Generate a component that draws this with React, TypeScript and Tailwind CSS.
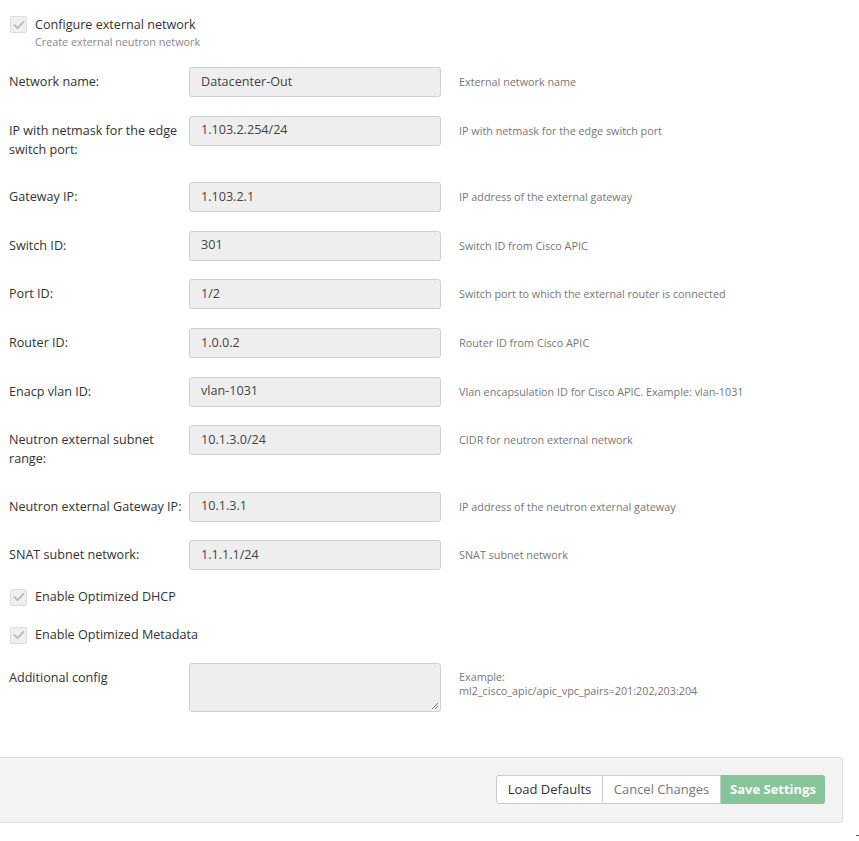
import React from "react"

const FONT = { fontFamily: '"Open Sans", "Liberation Sans", sans-serif' }

const rows: { label: string; value: string; help: string }[] = [
  { label: "Network name:", value: "Datacenter-Out", help: "External network name" },
  { label: "IP with netmask for the edge switch port:", value: "1.103.2.254/24", help: "IP with netmask for the edge switch port" },
  { label: "Gateway IP:", value: "1.103.2.1", help: "IP address of the external gateway" },
  { label: "Switch ID:", value: "301", help: "Switch ID from Cisco APIC" },
  { label: "Port ID:", value: "1/2", help: "Switch port to which the external router is connected" },
  { label: "Router ID:", value: "1.0.0.2", help: "Router ID from Cisco APIC" },
  { label: "Enacp vlan ID:", value: "vlan-1031", help: "Vlan encapsulation ID for Cisco APIC. Example: vlan-1031" },
  { label: "Neutron external subnet range:", value: "10.1.3.0/24", help: "CIDR for neutron external network" },
  { label: "Neutron external Gateway IP:", value: "10.1.3.1", help: "IP address of the neutron external gateway" },
  { label: "SNAT subnet network:", value: "1.1.1.1/24", help: "SNAT subnet network" },
]

function Check() {
  return (
    <span className="w-[17px] h-[17px] shrink-0 rounded-[2px] border border-[#dcdcdc] bg-[#efefef] flex items-center justify-center">
      <svg className="w-[12px] h-[12px]" viewBox="0 0 12 12" fill="none">
        <path d="M1.5 6.2l3 3 6-6.4" stroke="#b9b9b9" strokeWidth={1.8} strokeLinecap="round" strokeLinejoin="round" />
      </svg>
    </span>
  )
}

export default function App() {
  return (
    <div className="relative w-[859px] h-[841px] bg-white text-[#333] overflow-hidden" style={FONT}>
      <div className="pl-[10px] pt-[16px]">
        {/* Main checkbox */}
        <div className="flex items-center gap-2 h-[17px]">
          <Check />
          <span className="text-[12.6px] text-[#333] pt-[1px]">Configure external network</span>
        </div>
        <div className="pl-[25px] mt-[1px] text-[10.8px] text-[#888] leading-[16px]">Create external neutron network</div>
      </div>

      {/* Fields */}
      <div className="pl-[9px] mt-[17px]">
        {rows.map((r) => (
          <div key={r.label} className="flex items-start mb-[18.6px]">
            <label className="w-[180px] pt-[5px] pb-[5px] text-[12.6px] leading-[19px] text-[#333]">{r.label}</label>
            <div className="w-[252px] h-[30px] rounded-[3px] border border-[#cfcfcf] bg-[#eeeeee] px-[11px] flex items-center text-[12.6px] text-[#444]">
              {r.value}
            </div>
            <div className="ml-[18px] pt-[7px] text-[10.8px] leading-[16px] text-[#777]">{r.help}</div>
          </div>
        ))}
      </div>

      {/* Optimizations */}
      <div className="pl-[10px] mt-[3px]">
        <div className="flex items-center gap-2 h-[17px]">
          <Check />
          <span className="text-[12.6px]">Enable Optimized DHCP</span>
        </div>
        <div className="flex items-center gap-2 h-[17px] mt-[21px]">
          <Check />
          <span className="text-[12.6px]">Enable Optimized Metadata</span>
        </div>
      </div>

      <div className="pl-[9px] mt-[19px] flex items-start">
        <label className="w-[180px] pt-[5px] text-[12.6px] leading-[19px]">Additional config</label>
        <div className="relative w-[252px] h-[49px] rounded-[3px] border border-[#cfcfcf] bg-[#eeeeee]">
          <svg className="absolute right-[1px] bottom-[1px] w-[8px] h-[8px]" viewBox="0 0 8 8">
            <path d="M7 1L1 7M7 4L4 7" stroke="#777" strokeWidth={1} />
          </svg>
        </div>
        <div className="ml-[18px] pt-[7px] text-[10.8px] leading-[14px] text-[#777]">
          Example:
          <br />
          ml2_cisco_apic/apic_vpc_pairs=201:202,203:204
        </div>
      </div>

      {/* Footer */}
      <div className="mt-[45px] w-[843px] h-[66px] bg-[#f3f3f3] border-y border-r border-[#dedede] rounded-r-[3px] flex items-center justify-end pr-[17px]">
        <div className="flex">
          <button className="w-[107px] h-[29px] bg-white border border-[#cccccc] rounded-l-[3px] text-[13px] font-medium text-[#333]">
            Load Defaults
          </button>
          <button className="w-[118px] h-[29px] bg-white border-y border-r border-[#cccccc] text-[13px] text-[#777]">
            Cancel Changes
          </button>
          <button className="w-[104px] h-[29px] bg-[#86c59a] rounded-r-[3px] text-[13px] font-bold text-white">
            Save Settings
          </button>
        </div>
      </div>

      <span className="absolute right-0 bottom-[5px] w-[3px] h-[1px] bg-[#555]" />
    </div>
  )
}
